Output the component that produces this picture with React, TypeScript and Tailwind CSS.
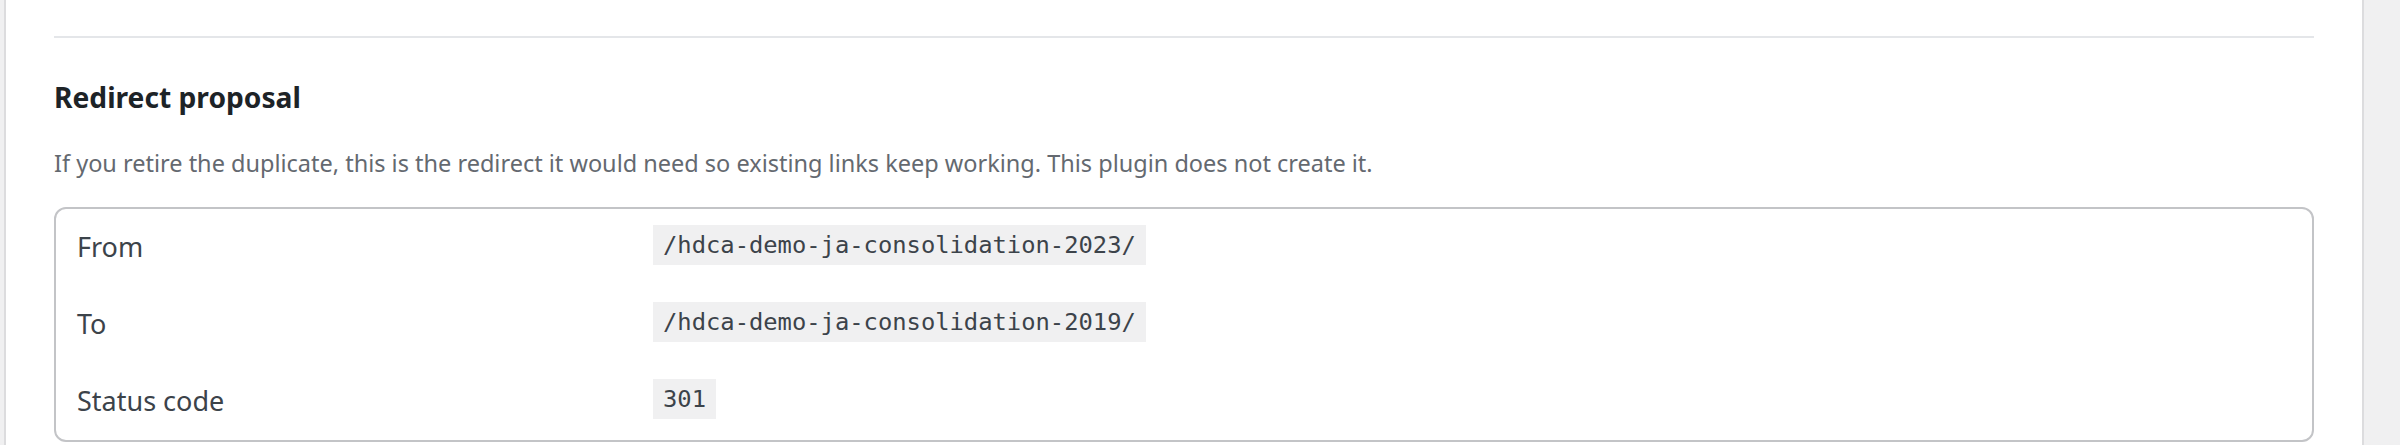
import React from "react";

interface Row {
  label: string;
  value: string;
}

const rows: Row[] = [
  { label: "From", value: "/hdca-demo-ja-consolidation-2023/" },
  { label: "To", value: "/hdca-demo-ja-consolidation-2019/" },
  { label: "Status code", value: "301" },
];

const App: React.FC = () => {
  return (
    <div className="flex h-[445px] w-[2400px] overflow-hidden bg-white font-['Segoe_UI','Noto_Sans',sans-serif]">
      {/* left admin edge */}
      <div className="w-[6px] shrink-0 border-r-2 border-[#dcdcde] bg-[#f0f0f1]" />

      <div className="flex-1 px-[48px]">
        {/* separator */}
        <div className="mt-[36px] h-[2px] bg-[#e4e6e9]" />

        {/* Heading */}
        <h3 className="mt-[41px] text-[28.2px] font-bold leading-[36px] text-[#1d2327]">
          Redirect proposal
        </h3>

        {/* Description */}
        <p className="mt-[32px] text-[23.5px] leading-[32px] text-[#646970]">
          If you retire the duplicate, this is the redirect it would need so
          existing links keep working. This plugin does not create it.
        </p>

        {/* Redirect table */}
        <div className="mt-[28px] rounded-[12px] border-2 border-[#c3c4c7]">
          {rows.map((row) => (
            <div
              key={row.label}
              className="grid h-[77px] grid-cols-[576px_1fr] items-center px-[21px]"
            >
              <span className="text-[27px] text-[#3c434a]">{row.label}</span>
              <span className="mb-[6px]">
                <code className="inline-block bg-[#f0f0f1] px-[10px] py-[4px] font-['Consolas','DejaVu_Sans_Mono',monospace] text-[23.8px] leading-[32px] text-[#3c434a]">
                  {row.value}
                </code>
              </span>
            </div>
          ))}
        </div>
      </div>

      {/* right admin edge */}
      <div className="w-[38px] shrink-0 border-l-2 border-[#dcdcde] bg-[#f0f0f1]" />
    </div>
  );
};

export default App;
